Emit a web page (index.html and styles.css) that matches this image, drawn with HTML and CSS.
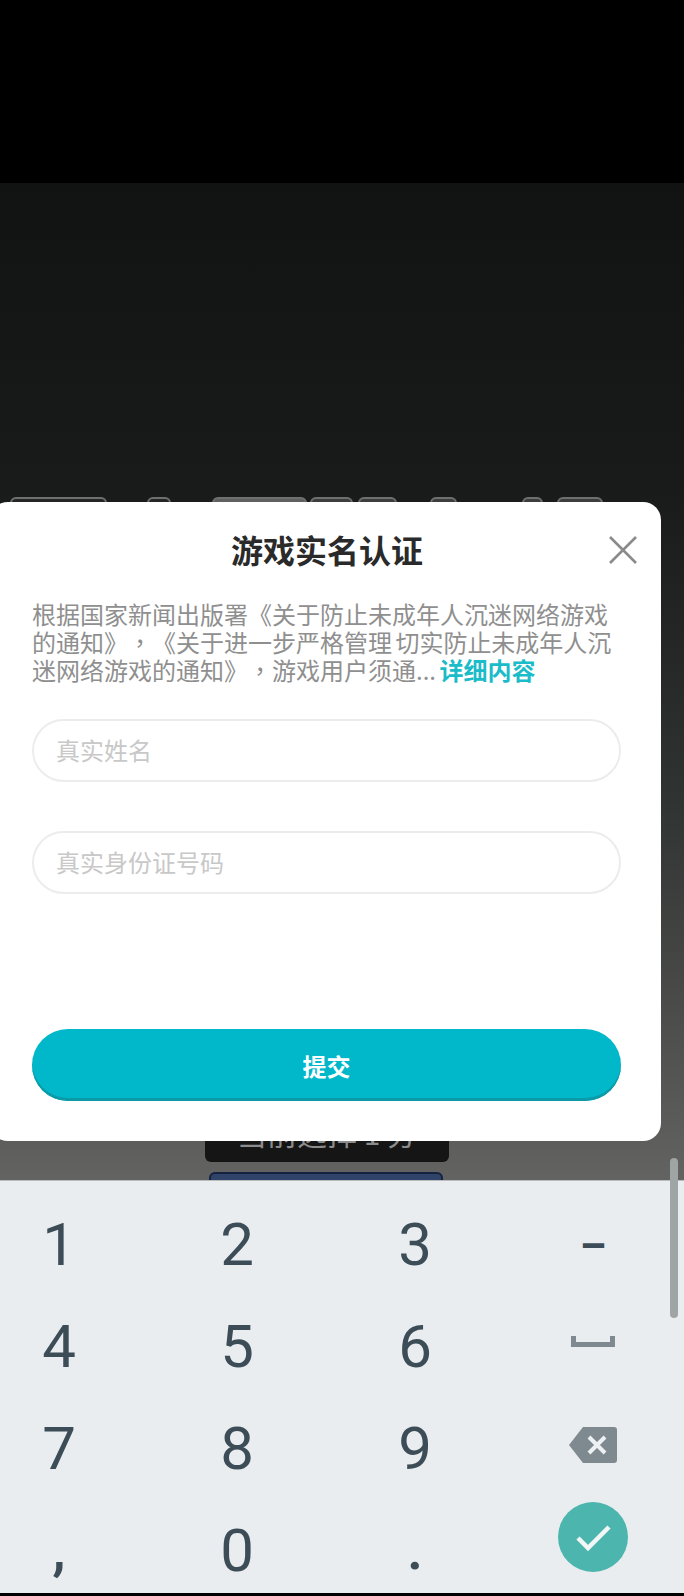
FILE: index.html
```html
<!DOCTYPE html>
<html lang="zh-CN">
<head>
    <meta charset="UTF-8">
    <meta name="viewport" content="width=device-width, initial-scale=1.0">
    <title>游戏实名认证</title>
    <link rel="stylesheet" href="styles.css">
</head>
<body>
    <div class="screen">
        <div class="top-black"></div>
        <div class="game">
            <div class="tabs">
                <span class="tab tab-a"></span>
                <span class="tab tab-b"></span>
                <span class="tab tab-c"></span>
                <span class="tab tab-d"></span>
                <span class="tab tab-e"></span>
                <span class="tab tab-f"></span>
                <span class="tab tab-g"></span>
                <span class="tab tab-h"></span>
            </div>
            <div class="dialog">
                <div class="dialog-head">
                    <h1>游戏实名认证</h1>
                    <svg class="close" viewBox="0 0 28 28" width="28" height="28">
                        <path d="M1 1L27 27M27 1L1 27" stroke="#8a8a8a" stroke-width="2.6" fill="none"/>
                    </svg>
                </div>
                <p class="notice">根据国家新闻出版署《关于防止未成年人沉迷网络游戏的通知》<span class="comma" lang="zh-TW">，</span>《关于进一步严格管理 切实防止未成年人沉迷网络游戏的通知》<span class="comma" lang="zh-TW">，</span>游戏用户须通... <a class="more">详细内容</a></p>
                <input class="field" type="text" placeholder="真实姓名">
                <input class="field" type="text" placeholder="真实身份证号码">
                <button class="submit">提交</button>
            </div>
            <div class="choice">当前选择 1 分</div>
            <div class="blue-card"></div>
        </div>
        <div class="keyboard">
            <div class="key">1</div>
            <div class="key">2</div>
            <div class="key">3</div>
            <div class="key key-minus">–</div>
            <div class="key">4</div>
            <div class="key">5</div>
            <div class="key">6</div>
            <div class="key">
                <svg class="space" viewBox="0 0 44 11" width="44" height="11">
                    <path d="M0 0H5V6H39V0H44V11H0Z" fill="#7f8a90"/>
                </svg>
            </div>
            <div class="key">7</div>
            <div class="key">8</div>
            <div class="key">9</div>
            <div class="key">
                <svg class="back" viewBox="0 0 48 36" width="48" height="36">
                    <path d="M14 0H45a3 3 0 0 1 3 3V33a3 3 0 0 1-3 3H14L0 18Z" fill="#7f8a90"/>
                    <path d="M20 10L36 26M36 10L20 26" stroke="#eef1f4" stroke-width="4" fill="none"/>
                </svg>
            </div>
            <div class="key key-low">,</div>
            <div class="key">0</div>
            <div class="key key-low">.</div>
            <div class="key">
                <svg class="done" viewBox="0 0 70 70" width="70" height="70">
                    <circle cx="35" cy="35" r="35" fill="#4cb5ad"/>
                    <path d="M20 36L30 46L51 25" stroke="#f2f7f6" stroke-width="4.5" fill="none"/>
                </svg>
            </div>
        </div>
        <div class="scroll-thumb"></div>
        <div class="bottom-black"></div>
    </div>
</body>
</html>
```

FILE: styles.css
```css
* {
    box-sizing: border-box;
}
body {
    margin: 0;
    font-family: "Noto Sans CJK SC", "Liberation Sans", sans-serif;
    background-color: #000;
}
.screen {
    position: relative;
    width: 684px;
    height: 1596px;
    overflow: hidden;
    display: flex;
    flex-direction: column;
}
.top-black {
    height: 183px;
    background-color: #000;
}
.game {
    height: 997px;
    padding-top: 314px;
    overflow: hidden;
    background: linear-gradient(#101312 0%, #191b1b 31%, #2f3331 62%, #4a4b49 82%, #636361 100%);
}
.tabs {
    height: 20px;
    margin-bottom: -15px;
    display: flex;
}
.tab {
    height: 20px;
    border: 2px solid #6e7070;
    border-radius: 6px 6px 0 0;
    background-color: #3c3e3e;
}
.tab-a { width: 97px; margin-left: 10px; background-color: #242626; }
.tab-b { width: 24px; margin-left: 40px; background-color: #242626; }
.tab-c { width: 95px; margin-left: 41px; background-color: #5f6161; }
.tab-d { width: 43px; margin-left: 3px; }
.tab-e { width: 39px; margin-left: 5px; }
.tab-f { width: 27px; margin-left: 33px; }
.tab-g { width: 21px; margin-left: 65px; }
.tab-h { width: 46px; margin-left: 14px; }
.dialog {
    position: relative;
    width: 671px;
    height: 639px;
    margin-left: -10px;
    padding: 0 40px 0 42px;
    background-color: #fff;
    border-radius: 18px;
}
.dialog-head {
    height: 98px;
    padding-top: 22px;
    position: relative;
}
h1 {
    margin: 0 0 0 1px;
    text-align: center;
    font-size: 32px;
    line-height: 50px;
    font-weight: 700;
    color: #2a2a2a;
}
.close {
    position: absolute;
    top: 34px;
    right: -16px;
}
.notice {
    margin: 0;
    font-size: 24px;
    line-height: 28px;
    word-spacing: -2px;
    color: #8f8f8f;
    text-spacing-trim: space-all;
}
.comma {
    font-family: "Noto Sans CJK TC", sans-serif;
}
.more {
    color: #19bcc8;
    font-weight: 700;
}
.field {
    display: block;
    width: 589px;
    height: 63px;
    margin-top: 49px;
    padding: 0 22px 2px;
    border: 2px solid #ececec;
    border-radius: 32px;
    background-color: #fff;
    font-family: inherit;
    font-size: 24px;
}
.notice + .field {
    margin-top: 35px;
}
.field::placeholder {
    color: #c8c8c8;
    opacity: 1;
}
.submit {
    display: block;
    width: 589px;
    height: 72px;
    margin-top: 135px;
    border: none;
    border-radius: 36px;
    background-color: #00b8c9;
    box-shadow: inset 0 -3px 0 #0a9aa8;
    color: #fff;
    font-family: inherit;
    font-size: 24px;
    font-weight: 700;
}
.choice {
    width: 244px;
    height: 41px;
    margin: -20px 0 0 205px;
    background-color: #151515;
    border-radius: 6px;
    color: #8c8c8c;
    font-size: 30px;
    line-height: 22px;
    text-align: center;
}
.blue-card {
    width: 234px;
    height: 30px;
    margin: 10px 0 0 209px;
    background-color: #2f4468;
    border: 2px solid #14233f;
    border-radius: 6px 6px 0 0;
}
.keyboard {
    height: 413px;
    padding-top: 12px;
    background-color: #e9edf0;
    border-top: 1px solid #b9bcbd;
    display: grid;
    grid-template-columns: repeat(4, 118px);
    column-gap: 60px;
    grid-auto-rows: 102px;
}
.key {
    display: flex;
    align-items: center;
    justify-content: center;
    font-family: Roboto, sans-serif;
    font-size: 60px;
    color: #3d4d58;
}
.key-minus {
    font-size: 42px;
    font-weight: 700;
    padding-top: 4px;
}
.key-low {
    font-weight: 500;
    padding-bottom: 4px;
}
.space {
    margin-top: -10px;
}
.back {
    margin-top: -6px;
}
.done {
    margin-top: -26px;
}
.scroll-thumb {
    position: absolute;
    left: 670px;
    top: 1158px;
    width: 8px;
    height: 160px;
    border-radius: 4px;
    background-color: #9fa4a5;
}
.bottom-black {
    position: absolute;
    left: 0;
    right: 0;
    bottom: 0;
    height: 3px;
    background-color: #000;
}
```
